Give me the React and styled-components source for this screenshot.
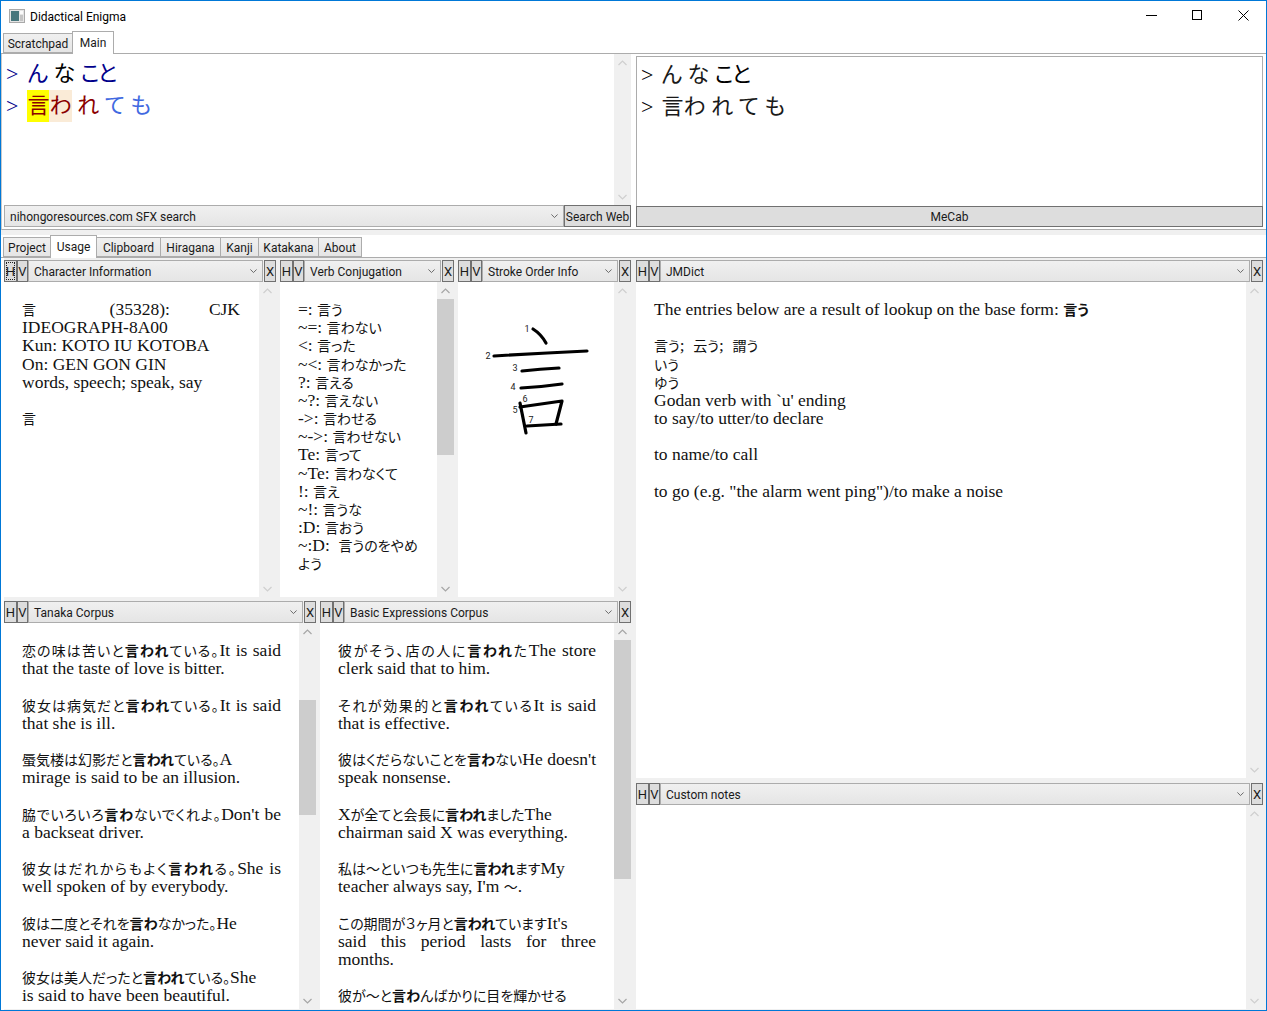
import React from 'react'
import styled, { createGlobalStyle } from 'styled-components'

const SERIF = `"Liberation Serif", "Noto Sans CJK JP", serif`
const SANS = `Roboto, "Noto Sans CJK JP", sans-serif`
const CJK_RUN = /([\u3000-\u9fff\uff00-\uffef]+)/

const GlobalStyle = createGlobalStyle`
  html, body { margin: 0; padding: 0; background: white; }
  * { box-sizing: border-box; }
`

const topTabs = [
  { label: 'Scratchpad', width: 70 },
  { label: 'Main', width: 42, active: true }
]

const bottomTabs = [
  { label: 'Project', width: 48 },
  { label: 'Usage', width: 47, active: true },
  { label: 'Clipboard', width: 65 },
  { label: 'Hiragana', width: 61 },
  { label: 'Kanji', width: 39 },
  { label: 'Katakana', width: 61 },
  { label: 'About', width: 44 }
]

const NAVY = '#00008b'
const RED = '#8b0000'
const ROYAL = '#4169e1'

const coloredLines = [
  [
    { text: '>', color: NAVY, gap: 9 },
    { text: 'ん', color: NAVY },
    { text: ' ' },
    { text: 'な', color: 'black' },
    { text: ' ' },
    { text: 'こと', color: NAVY, tight: true }
  ],
  [
    { text: '>', color: NAVY, gap: 9 },
    { text: '言', color: RED, bg: 'yellow' },
    { text: 'わ', color: RED, bg: '#faebd7' },
    { text: ' ' },
    { text: 'れ', color: RED },
    { text: ' ' },
    { text: 'て', color: ROYAL },
    { text: ' ' },
    { text: 'も', color: ROYAL }
  ]
]

const characterLines = [
  { text: '言 (35328): CJK', justify: true },
  'IDEOGRAPH-8A00',
  'Kun: KOTO IU KOTOBA',
  'On: GEN GON GIN',
  'words, speech; speak, say',
  '',
  '言'
]

const verbLines = [
  '=: 言う', '~=: 言わない', '<: 言った', '~<: 言わなかった', '?: 言える', '~?: 言えない',
  '->: 言わせる', '~->: 言わせない', 'Te: 言って', '~Te: 言わなくて', '!: 言え', '~!: 言うな',
  ':D: 言おう', '~:D:  言うのをやめ', 'よう'
]

const tanakaLines = [
  { text: '恋の味は苦いと*言われ*ている。It is said', justify: true },
  'that the taste of love is bitter.',
  '',
  { text: '彼女は病気だと*言われ*ている。It is said', justify: true },
  'that she is ill.',
  '',
  '蜃気楼は幻影だと*言われ*ている。A',
  'mirage is said to be an illusion.',
  '',
  { text: '脇でいろいろ*言わ*ないでくれよ。Don\'t be', justify: true },
  'a backseat driver.',
  '',
  { text: '彼女はだれからもよく*言われ*る。She is', justify: true },
  'well spoken of by everybody.',
  '',
  '彼は二度とそれを*言わ*なかった。He',
  'never said it again.',
  '',
  '彼女は美人だったと*言われ*ている。She',
  'is said to have been beautiful.'
]

const basicLines = [
  { text: '彼がそう、店の人に*言われ*たThe store', justify: true },
  'clerk said that to him.',
  '',
  { text: 'それが効果的と*言われ*ているIt is said', justify: true },
  'that is effective.',
  '',
  { text: '彼はくだらないことを*言わ*ないHe doesn\'t', justify: true },
  'speak nonsense.',
  '',
  'Xが全てと会長に*言われ*ましたThe',
  'chairman said X was everything.',
  '',
  '私は〜といつも先生に*言われ*ますMy',
  'teacher always say, I\'m 〜.',
  '',
  'この期間が３ヶ月と*言われ*ていますIt\'s',
  { text: 'said this period lasts for three', justify: true },
  'months.',
  '',
  '彼が〜と*言わ*んばかりに目を輝かせる'
]

const jmdictLines = [
  'The entries below are a result of lookup on the base form: *言う*',
  '',
  '言う;  云う;  謂う',
  'いう',
  'ゆう',
  'Godan verb with `u\' ending',
  'to say/to utter/to declare',
  '',
  'to name/to call',
  '',
  'to go (e.g. "the alarm went ping")/to make a noise'
]

const strokes = [
  'M533 330 Q541 335 546 344',
  'M494 357 Q540 354 587 352',
  'M522 372 Q540 370 559 369',
  'M521 389 Q541 388 562 385',
  'M520 404 L526 434',
  'M520 408 L562 402 L556 425',
  'M527 427 L561 425'
]

const strokeLabels = [
  [527, 333, '1'], [488, 360, '2'], [515, 372, '3'], [513, 391, '4'],
  [515, 414, '5'], [525, 403, '6'], [531, 424, '7']
]

const Chevron = ({ up, color = '#c9c9c9', width = 9 }) => (
  <svg width={width} height="6" viewBox="0 0 9 6" fill="none" stroke={color} strokeWidth="1.2">
    <path d={up ? 'M0.5 5 L4.5 1 L8.5 5' : 'M0.5 1 L4.5 5 L8.5 1'} />
  </svg>
)

const Mixed = ({ text }) => text.split(CJK_RUN).map((run, i) => (
  i % 2 ? <CjkRun key={i}>{run}</CjkRun> : run
))

const Rich = ({ text }) => (
  <>
    {text.split('*').map((part, i) => (
      i % 2 ? <b key={i}><Mixed text={part} /></b> : <Mixed key={i} text={part} />
    ))}
  </>
)

const Lines = ({ items }) => items.map((item, i) => {
  const line = typeof item === 'string' ? { text: item } : item
  return (
    <TextLine key={i} $justify={line.justify}>
      <Rich text={line.text} />
    </TextLine>
  )
})

const ScrollBar = ({ thumbTop, thumbHeight, dark }) => (
  <ScrollTrack>
    <ScrollArrow><Chevron up color={dark ? '#a6a6a6' : '#cfcfcf'} /></ScrollArrow>
    <ThumbArea>
      {thumbHeight && <Thumb $top={thumbTop} $height={thumbHeight} />}
    </ThumbArea>
    <ScrollArrow><Chevron color={dark ? '#a6a6a6' : '#cfcfcf'} /></ScrollArrow>
  </ScrollTrack>
)

const Panel = ({ title, focused, thumbTop, thumbHeight, children }) => (
  <PanelBox>
    <PanelHeader>
      <SmallButton $width={13} $focused={focused}>H</SmallButton>
      <SmallButton $width={11}>V</SmallButton>
      <ComboBox $indent={6}>
        <ComboLabel>{title}</ComboLabel>
        <Chevron color="#606060" width={7} />
      </ComboBox>
      <CloseButton $width={12}>X</CloseButton>
    </PanelHeader>
    <PanelBody>
      <PanelContent>{children}</PanelContent>
      <ScrollBar thumbTop={thumbTop} thumbHeight={thumbHeight} dark={!!thumbHeight} />
    </PanelBody>
  </PanelBox>
)

const Tabs = ({ items }) => (
  <TabStrip>
    {items.map((tab) => (
      <Tab key={tab.label} $active={tab.active} $width={tab.width}>{tab.label}</Tab>
    ))}
  </TabStrip>
)

export default function App () {
  return (
    <Window>
      <GlobalStyle />
      <TitleBar>
        <AppIcon width="16" height="14" viewBox="0 0 16 14">
          <rect x="0.5" y="0.5" width="15" height="13" fill="#e4e4e4" stroke="#a9a9a9" />
          <rect x="2" y="2" width="8" height="10" fill="#47767c" />
          <rect x="11" y="2" width="3" height="3" fill="#fafafa" />
          <rect x="11" y="6" width="3" height="6" fill="#c4c4c4" />
        </AppIcon>
        <WindowTitle>Didactical Enigma</WindowTitle>
        <WindowControls>
          <WindowControl>
            <svg width="11" height="11" viewBox="0 0 11 11" stroke="black" fill="none"><path d="M0 5.5 H11" /></svg>
          </WindowControl>
          <WindowControl>
            <svg width="11" height="11" viewBox="0 0 11 11" stroke="black" fill="none"><rect x="0.5" y="0.5" width="9" height="9" /></svg>
          </WindowControl>
          <WindowControl>
            <svg width="11" height="11" viewBox="0 0 11 11" stroke="black" fill="none"><path d="M0.5 0.5 L10.5 10.5 M10.5 0.5 L0.5 10.5" /></svg>
          </WindowControl>
        </WindowControls>
      </TitleBar>

      <Tabs items={topTabs} />

      <TopPane>
        <TopColumn $width={628}>
          <InputRow>
            <BigText>
              {coloredLines.map((line, i) => (
                <BigLine key={i}>
                  {line.map((glyph, j) => (
                    <Glyph key={j} $color={glyph.color} $bg={glyph.bg} $gap={glyph.gap} $tight={glyph.tight}>{glyph.text}</Glyph>
                  ))}
                </BigLine>
              ))}
            </BigText>
            <ScrollBar />
          </InputRow>
          <ActionRow $height={22} $indent={1}>
            <ComboBox $indent={6}>
              <ComboLabel>nihongoresources.com SFX search</ComboLabel>
              <Chevron color="#606060" width={7} />
            </ComboBox>
            <ActionButton $width={67}>Search Web</ActionButton>
          </ActionRow>
        </TopColumn>
        <TopColumn $width={627}>
          <OutputBox>
            <BigLine>
              <Glyph $gap={8}>&gt;</Glyph>{'ん な '}<Glyph $tight>こと</Glyph>
            </BigLine>
            <BigLine>
              <Glyph $gap={8}>&gt;</Glyph>{'言わ れ て も'}
            </BigLine>
          </OutputBox>
          <ActionRow $height={21}>
            <ActionButton>MeCab</ActionButton>
          </ActionRow>
        </TopColumn>
      </TopPane>

      <Splitter />

      <Tabs items={bottomTabs} />

      <BottomPane>
        <LeftStack>
          <UpperRow>
            <Panel title="Character Information" focused>
              <BodyText $right={19}><Lines items={characterLines} /></BodyText>
            </Panel>
            <Panel title="Verb Conjugation" thumbTop={0} thumbHeight={156}>
              <BodyText $right={0}><Lines items={verbLines} /></BodyText>
            </Panel>
            <Panel title="Stroke Order Info">
              <StrokeImage width="130" height="140" viewBox="470 310 130 140">
                {strokes.map((d) => (
                  <path key={d} d={d} fill="none" stroke="black" strokeWidth="3.2" strokeLinecap="round" strokeLinejoin="round" />
                ))}
                {strokeLabels.map(([x, y, label]) => (
                  <StrokeLabel key={label} x={x} y={y} textAnchor="middle">{label}</StrokeLabel>
                ))}
              </StrokeImage>
            </Panel>
          </UpperRow>
          <LowerRow>
            <Panel title="Tanaka Corpus" thumbTop={60} thumbHeight={115}>
              <BodyText $right={18}><Lines items={tanakaLines} /></BodyText>
            </Panel>
            <Panel title="Basic Expressions Corpus" thumbTop={0} thumbHeight={239}>
              <BodyText $right={18}><Lines items={basicLines} /></BodyText>
            </Panel>
          </LowerRow>
        </LeftStack>
        <RightStack>
          <Panel title="JMDict">
            <BodyText $right={18}><Lines items={jmdictLines} /></BodyText>
          </Panel>
          <Panel title="Custom notes" />
        </RightStack>
      </BottomPane>
    </Window>
  )
}

const Window = styled.div`
  width: 1267px;
  height: 1011px;
  border: 1px solid #0078d7;
  background: white;
  display: flex;
  flex-direction: column;
  overflow: hidden;
  font-family: ${SANS};
  font-size: 12px;
  font-feature-settings: "palt";
  color: #1a1a1a;
`

const TitleBar = styled.div`
  height: 30px;
  flex: none;
  display: flex;
  align-items: center;
  padding-left: 8px;
`

const AppIcon = styled.svg`
  flex: none;
  margin-right: 5px;
`

const WindowTitle = styled.div`
  flex: 1;
  padding-top: 1px;
  color: black;
`

const WindowControls = styled.div`
  display: flex;
  height: 100%;
`

const WindowControl = styled.div`
  width: 46px;
  display: flex;
  align-items: center;
  justify-content: center;
  padding-bottom: 1px;
`

const TabStrip = styled.div`
  height: 23px;
  flex: none;
  display: flex;
  align-items: flex-end;
  padding-left: 2px;
  border-bottom: 1px solid #acacac;
`

const Tab = styled.div`
  width: ${props => props.$width}px;
  height: ${props => props.$active ? 23 : 20}px;
  margin-bottom: ${props => props.$active ? -1 : 0}px;
  margin-right: -1px;
  display: flex;
  align-items: center;
  justify-content: center;
  padding-top: ${props => props.$active ? 0 : 2}px;
  border: 1px solid #acacac;
  border-bottom: ${props => props.$active ? 'none' : '1px solid #acacac'};
  background: ${props => props.$active ? 'white' : 'linear-gradient(#f0f0f0, #e5e5e5)'};
  position: relative;
  z-index: ${props => props.$active ? 1 : 0};
`

const TopPane = styled.div`
  height: 176px;
  flex: none;
  display: flex;
  gap: 5px;
  padding: 0 2px 1px 1px;
  border-left: 1px solid #c9c9c9;
  border-bottom: 1px solid #acacac;
`

const TopColumn = styled.div`
  flex: 0 0 ${props => props.$width}px;
  min-width: 0;
  display: flex;
  flex-direction: column;
  padding-bottom: 1px;
`

const InputRow = styled.div`
  flex: 1;
  min-height: 0;
  display: flex;
`

const BigText = styled.div`
  flex: 1;
  padding: 4px 3px 0;
`

const BigLine = styled.div`
  height: 32px;
  line-height: 32px;
  font-size: 22px;
  font-family: ${SERIF};
  white-space: pre;
`

const Glyph = styled.span`
  display: inline-block;
  white-space: pre;
  margin-right: ${props => props.$gap || 0}px;
  letter-spacing: ${props => props.$tight ? -2 : 0}px;
  color: ${props => props.$color || 'black'};
  background: ${props => props.$bg || 'transparent'};
`

const OutputBox = styled.div`
  flex: 1;
  margin-top: 2px;
  padding: 2px 4px 0;
  border: 1px solid #acacac;
  border-bottom: none;
`

const ActionRow = styled.div`
  height: ${props => props.$height}px;
  flex: none;
  display: flex;
  padding-left: ${props => props.$indent || 0}px;
`

const ComboBox = styled.div`
  flex: 1;
  min-width: 0;
  display: flex;
  align-items: center;
  padding: 0 5px 0 ${props => props.$indent - 1}px;
  border: 1px solid #acacac;
  background: linear-gradient(#f0f0f0, #e5e5e5);
`

const ComboLabel = styled.span`
  flex: 1;
  padding-top: 1px;
  white-space: nowrap;
`

const ActionButton = styled.div`
  flex: ${props => props.$width ? `0 0 ${props.$width}px` : 1};
  display: flex;
  align-items: center;
  justify-content: center;
  padding-top: 1px;
  border: 1px solid #707070;
  background: #dddddd;
  white-space: nowrap;
`

const Splitter = styled.div`
  height: 5px;
  flex: none;
  background: #f0f0f0;
`

const BottomPane = styled.div`
  flex: 1;
  min-height: 0;
  display: grid;
  grid-template-columns: 627px 627px;
  column-gap: 5px;
  padding: 2px 0 1px 0;
  border-left: 3px solid white;
  background: #f0f0f0;
`

const LeftStack = styled.div`
  display: grid;
  grid-template-rows: 337px 408px;
  row-gap: 4px;
  min-height: 0;
`

const RightStack = styled.div`
  display: grid;
  grid-template-rows: 518px 226px;
  row-gap: 5px;
  min-height: 0;
`

const UpperRow = styled.div`
  display: grid;
  grid-template-columns: 272px 174px 173px;
  column-gap: 4px;
  min-height: 0;
`

const LowerRow = styled.div`
  display: grid;
  grid-template-columns: 312px 311px;
  column-gap: 4px;
  min-height: 0;
`

const PanelBox = styled.div`
  min-height: 0;
  min-width: 0;
  display: flex;
  flex-direction: column;
  background: white;
`

const PanelHeader = styled.div`
  height: 22px;
  flex: none;
  display: flex;
  background: #f0f0f0;
`

const SmallButton = styled.div`
  width: ${props => props.$width}px;
  display: flex;
  align-items: center;
  justify-content: center;
  flex: none;
  font-size: 13px;
  border: 1px solid #707070;
  background: #dddddd;
  position: relative;

  ${props => props.$focused && `
    &::after {
      content: '';
      position: absolute;
      inset: 1px;
      border: 1px dotted #222;
    }
  `}
`

const CloseButton = styled(SmallButton)`
  margin-left: 1px;
`

const PanelBody = styled.div`
  flex: 1;
  min-height: 0;
  display: flex;
`

const PanelContent = styled.div`
  flex: 1;
  min-width: 0;
  overflow: hidden;
`

const BodyText = styled.div`
  padding: 18px ${props => props.$right}px 0 18px;
  font-family: ${SERIF};
  font-size: 17.5px;
  line-height: 18.18px;
  color: #111;
`

const TextLine = styled.div`
  height: 18.18px;
  white-space: ${props => props.$justify ? 'nowrap' : 'pre'};
  text-align-last: ${props => props.$justify ? 'justify' : 'auto'};
  text-align: ${props => props.$justify ? 'justify' : 'left'};
`

const CjkRun = styled.span`
  font-family: "Noto Sans CJK JP", sans-serif;
  font-size: 14px;
`

const StrokeImage = styled.svg`
  display: block;
  margin: 27px 0 0 12px;
`

const StrokeLabel = styled.text`
  font-family: ${SANS};
  font-size: 9px;
  fill: #222;
`

const ScrollTrack = styled.div`
  width: 17px;
  flex: none;
  display: flex;
  flex-direction: column;
  background: #f0f0f0;
`

const ScrollArrow = styled.div`
  height: 17px;
  flex: none;
  display: flex;
  align-items: center;
  justify-content: center;
`

const ThumbArea = styled.div`
  flex: 1;
  min-height: 0;
`

const Thumb = styled.div`
  height: ${props => props.$height}px;
  margin-top: ${props => props.$top}px;
  background: #cdcdcd;
`
